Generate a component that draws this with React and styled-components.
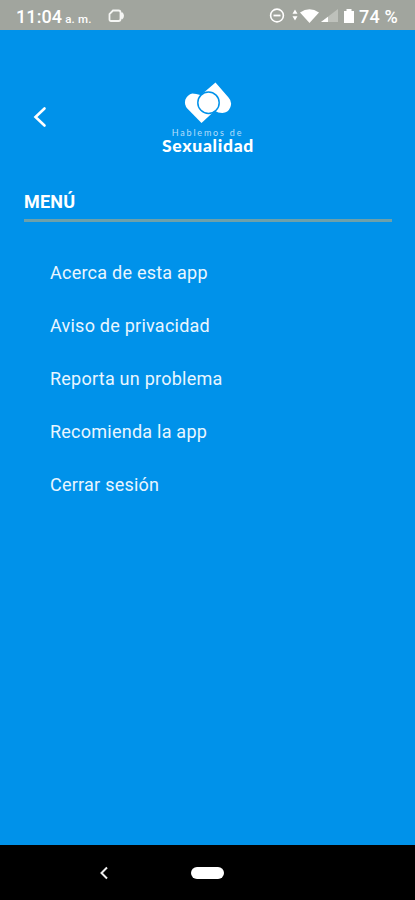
import React from 'react';
import styled, { createGlobalStyle } from 'styled-components';

const GlobalStyle = createGlobalStyle`
  * {
    box-sizing: border-box;
  }
  body {
    margin: 0;
    font-family: Roboto, sans-serif;
  }
`;

const Screen = styled.div`
  display: flex;
  flex-direction: column;
  height: 900px;
  color: #fff;
  background: #0092ea;
`;

const StatusBar = styled.div`
  display: flex;
  align-items: center;
  height: 30px;
  padding: 2px 17px 0 16px;
  background: #a1a59e;
`;
const Clock = styled.div`
  display: flex;
  align-items: baseline;
  font-size: 18px;
  font-weight: 500;
  letter-spacing: 0.1px;
`;
const Meridiem = styled.span`
  margin-left: 3px;
  font-size: 11.5px;
  letter-spacing: 0.2px;
`;
const CameraIcon = styled.svg`
  margin-left: 16px;
`;
const StatusIcons = styled.svg`
  margin-left: auto;
`;
const Battery = styled.div`
  margin-left: 4px;
  font-size: 18px;
  font-weight: 500;
  letter-spacing: 0.2px;
`;

const Header = styled.header`
  display: grid;
  grid-template-columns: 80px 1fr 80px;
  height: 160px;
  padding-top: 50px;
`;
const BackButton = styled.button`
  display: flex;
  width: 80px;
  height: 74px;
  align-items: center;
  justify-content: center;
  padding: 0;
  border: 0;
  color: inherit;
  background: none;
`;
const Brand = styled.div`
  display: flex;
  flex-direction: column;
  align-items: center;
`;
const BrandTop = styled.div`
  height: 9px;
  margin-top: 4px;
  font-family: Lato, sans-serif;
  font-size: 9px;
  line-height: 9px;
  letter-spacing: 1.8px;
  color: #b5dffb;
  white-space: nowrap;
`;
const BrandName = styled.div`
  padding-left: 1px;
  font-family: Lato, sans-serif;
  font-size: 17.5px;
  font-weight: 900;
  line-height: 18px;
  letter-spacing: 0.7px;
  white-space: nowrap;
`;

const Title = styled.h1`
  height: 32px;
  margin: 0 23px 0 24px;
  border-bottom: 3px solid #6da0aa;
  font-size: 18px;
  font-weight: 700;
  line-height: 24px;
  letter-spacing: 0.2px;
`;
const Menu = styled.nav`
  display: flex;
  flex: 1;
  flex-direction: column;
  padding: 24px 0 0 50px;
`;
const MenuItem = styled.a`
  height: 53px;
  font-size: 18px;
  line-height: 53px;
  letter-spacing: 0.24px;
  color: #e9f6ff;
`;

const SystemBar = styled.footer`
  display: grid;
  grid-template-columns: 1fr 33px 1fr;
  align-items: center;
  height: 55px;
  background: #000;
`;
const SystemBack = styled.svg`
  justify-self: center;
  margin-left: 17px;
`;
const HomePill = styled.div`
  height: 12px;
  border-radius: 6px;
  background: #fff;
`;

const items = [
  'Acerca de esta app',
  'Aviso de privacidad',
  'Reporta un problema',
  'Recomienda la app',
  'Cerrar sesión',
];

const App = () => (
  <>
    <GlobalStyle />
    <Screen>
      <StatusBar>
        <Clock>
          11:04<Meridiem>a. m.</Meridiem>
        </Clock>
        <CameraIcon width="17" height="14" viewBox="0 0 17 14">
          <path d="M5 1.5h5.500q2 0 2 2v6.500q0 2-2 2H3q-1.500 0-1.500-1.500V5z" fill="none" stroke="#f4f5f3" strokeWidth="1.8" />
          <path d="M12 5l2-2q2 1.500 2 3.800t-2 3.800l-2-2z" fill="#f4f5f3" />
        </CameraIcon>
        <StatusIcons width="86" height="16" viewBox="0 0 86 16">
          <circle cx="8" cy="7.500" r="6.400" fill="none" stroke="#fff" strokeWidth="1.600" />
          <path d="M4.500 7.500h7" stroke="#fff" strokeWidth="1.800" />
          <path d="M26 1.500l2.500 4.300h-5zM26 12.500l2.500-4.300h-5z" fill="#fff" />
          <path d="M31 4.500Q40.500 -2 50 4.500L40.500 15z" fill="#fff" />
          <path d="M52 14L69 1v13z" fill="#bec1bb" />
          <path d="M52 14l7-5.300V14z" fill="#fff" />
          <path d="M75 3h2.500V1h5v2H85v12H75z" fill="#fff" />
        </StatusIcons>
        <Battery>74 %</Battery>
      </StatusBar>

      <Header>
        <BackButton aria-label="Volver">
          <svg width="16" height="24" viewBox="0 0 16 24">
            <path d="M12.500 3.500L3.500 12l9 8.500" fill="none" stroke="#fff" strokeWidth="2.600" strokeLinecap="round" />
          </svg>
        </BackButton>
        <Brand>
          <svg width="48" height="44" viewBox="0.700 0 48 44">
            <path d="M18.200 43L4 28.600A9.200 9.200 0 0 1 9 13.500Q13 13.500 17 15L29 33z" fill="#fff" />
            <path d="M32.200 2.500L45.200 17.500A9.200 9.200 0 0 1 39 33Q35 33 31 30.500L20 13z" fill="#fff" />
            <circle cx="25.200" cy="22.700" r="10.700" fill="#fff" stroke="#0092ea" strokeWidth="1.500" />
          </svg>
          <BrandTop>Hablemos de</BrandTop>
          <BrandName>Sexualidad</BrandName>
        </Brand>
      </Header>

      <Title>MENÚ</Title>
      <Menu>
        {items.map((item) => (
          <MenuItem key={item}>{item}</MenuItem>
        ))}
      </Menu>

      <SystemBar>
        <SystemBack width="10" height="14" viewBox="0 0 10 14">
          <path d="M8 1.500L2.500 7L8 12.500" fill="none" stroke="#eee" strokeWidth="2" />
        </SystemBack>
        <HomePill />
      </SystemBar>
    </Screen>
  </>
);

export default App;
